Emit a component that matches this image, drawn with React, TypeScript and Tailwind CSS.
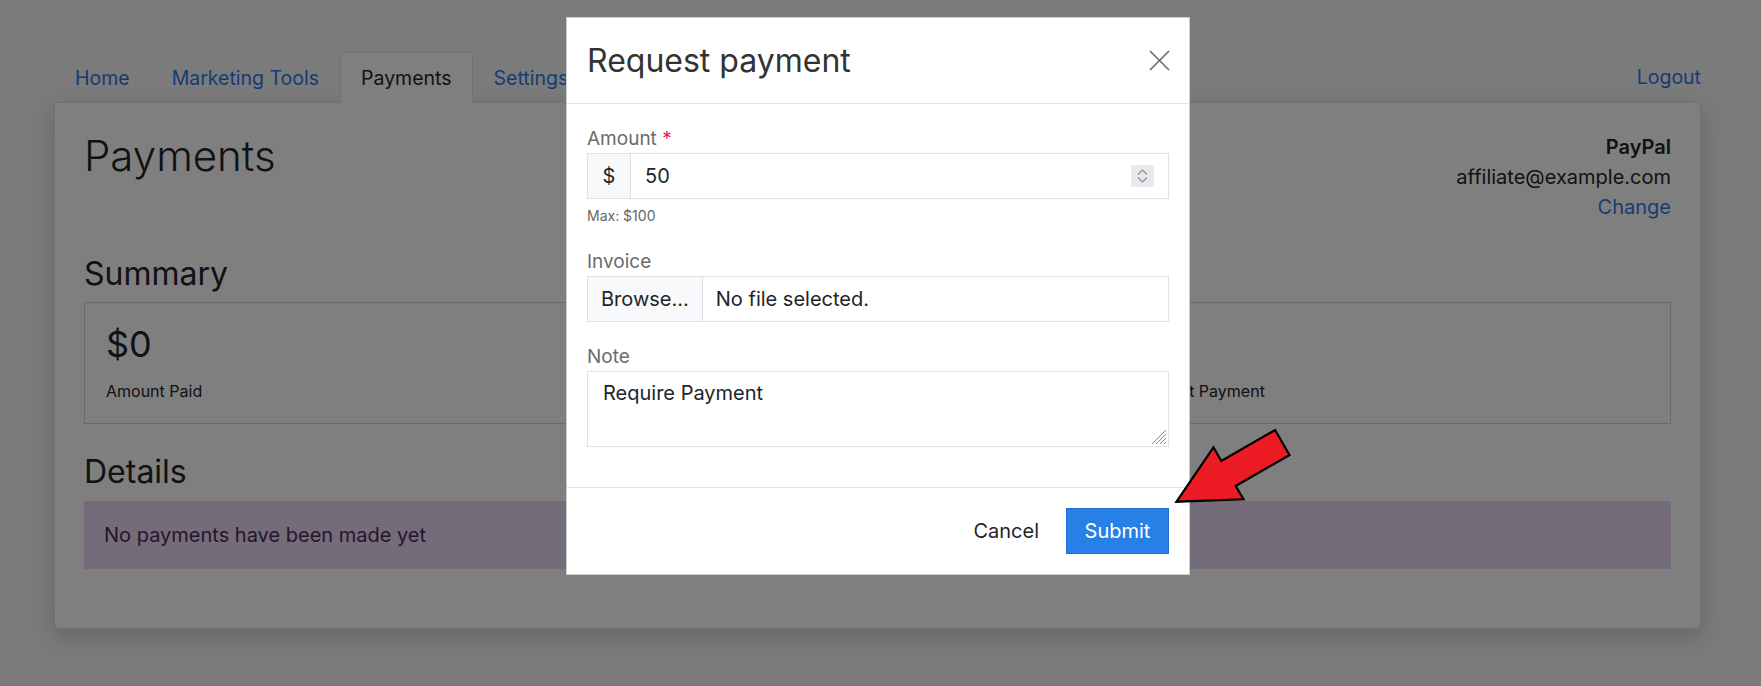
const tabs = ['Home', 'Marketing Tools', 'Payments', 'Settings'];

const stats = [
  { value: '$0', label: 'Amount Paid' },
  { value: '$0', label: 'Pending' },
  { value: '-', label: 'Last Payment' },
];

function Arrow() {
  return (
    <svg
      className="absolute left-[1170px] top-[424px]"
      width="126"
      height="84"
      viewBox="0 0 126 84"
    >
      <polygon
        points="6.5,77.7 43.5,23.3 51.3,37 105.1,6 119.5,31 65.7,62 73.5,75.3"
        fill="#ed1c24"
        stroke="#000"
        strokeWidth="2.2"
        strokeLinejoin="miter"
      />
    </svg>
  );
}

function RequestModal() {
  return (
    <div className="absolute left-[566px] top-[17px] w-[624px] bg-white border border-black/20 text-[#212529]">
      <div className="h-[86px] pl-[20px] pr-[19px] flex items-center justify-between border-b border-[#dee2e6]">
        <h5 className="text-[32px] leading-[38px] text-[#333]">Request payment</h5>
        <svg width="21" height="21" viewBox="0 0 21 21">
          <g stroke="#707070" strokeWidth="1.7">
            <line x1="1" y1="1" x2="20" y2="20" />
            <line x1="20" y1="1" x2="1" y2="20" />
          </g>
        </svg>
      </div>

      <div className="px-[20px] pt-[20px] pb-[40px]">
        <label className="block text-[19px] leading-[29px] text-[#6b6b6b]">
          Amount <span className="text-[#e8174f]">*</span>
        </label>
        <div className="flex h-[46px] border border-[#dee2e6]">
          <div className="w-[43px] flex items-center justify-center bg-[#f8f9fa] border-r border-[#dee2e6] text-[20px]">
            $
          </div>
          <div className="flex-1 flex items-center justify-between pl-[14px] pr-[14px] text-[20px] leading-[30px]">
            <span>50</span>
            <div className="w-[23px] h-[22px] bg-[#e9e9ed] rounded-[2px] flex flex-col items-center justify-center gap-[2px]">
              <svg width="11" height="6" viewBox="0 0 11 6">
                <path d="M1 5.5 L5.5 1 L10 5.5" fill="none" stroke="#8a8a8a" strokeWidth="1.1" />
              </svg>
              <svg width="11" height="6" viewBox="0 0 11 6">
                <path d="M1 0.5 L5.5 5 L10 0.5" fill="none" stroke="#8a8a8a" strokeWidth="1.1" />
              </svg>
            </div>
          </div>
        </div>
        <p className="mt-[6px] text-[14px] leading-[21px] text-[#666]">Max: $100</p>

        <label className="block mt-[21px] text-[19px] leading-[29px] text-[#6b6b6b]">Invoice</label>
        <div className="flex h-[46px] border border-[#dee2e6] text-[20px]">
          <div className="px-[13px] flex items-center bg-[#f8f9fa] border-r border-[#dee2e6]">
            Browse…
          </div>
          <div className="flex items-center pl-[13px]">No file selected.</div>
        </div>

        <label className="block mt-[20px] text-[19px] leading-[29px] text-[#6b6b6b]">Note</label>
        <div className="relative h-[76px] border border-[#dee2e6] px-[15px] pt-[6px] text-[20px] leading-[30px]">
          Require Payment
          <svg className="absolute right-[1px] bottom-[1px]" width="17" height="17" viewBox="0 0 17 17">
            <g stroke="#8a8a8a" strokeWidth="1">
              <line x1="2" y1="16" x2="16" y2="2" />
              <line x1="6" y1="16" x2="16" y2="6" />
              <line x1="10" y1="16" x2="16" y2="10" />
              <line x1="14" y1="16" x2="16" y2="14" />
            </g>
          </svg>
        </div>
      </div>

      <div className="border-t border-[#dee2e6] p-[20px] flex justify-end items-center gap-[11px]">
        <button className="h-[46px] px-[16px] text-[20px]">Cancel</button>
        <button className="h-[46px] w-[103px] bg-[#2680e5] border border-[#1e70d2] text-white text-[20px]">
          Submit
        </button>
      </div>
    </div>
  );
}

export default function App() {
  return (
    <div className="relative h-[686px] overflow-hidden bg-[#f6f6f6] font-['Inter',sans-serif] text-[#212529]">
      <div className="w-[1755px] px-[54px] pt-[52px]">
        <nav className="flex items-end justify-between text-[19.5px] leading-[30px]">
          <ul className="flex">
            {tabs.map((t) => (
              <li
                key={t}
                className={
                  t === 'Payments'
                    ? 'h-[51px] -mb-px px-[20px] flex items-center bg-white border border-[#dee2e6] border-b-white rounded-t-[3px] text-[#212529] relative'
                    : 'h-[51px] -mb-px px-[20px] flex items-center border border-transparent text-[#2a7ae2]'
                }
              >
                {t}
              </li>
            ))}
          </ul>
          <a className="h-[50px] flex items-center text-[#2a7ae2]">Logout</a>
        </nav>

        <div className="bg-white border border-[#dee2e6] rounded-b-[6px] shadow-[0_8px_24px_rgba(0,0,0,0.18)] px-[29px] pt-[29px] pb-[59px]">
          <div className="flex justify-between items-start">
            <h2 className="text-[42px] leading-[48px] font-light">Payments</h2>
            <div className="text-right text-[20px] leading-[30px]">
              <p className="font-semibold">PayPal</p>
              <p>affiliate@example.com</p>
              <a className="text-[#2a7ae2]">Change</a>
            </div>
          </div>

          <h3 className="mt-[34px] mb-[10px] text-[32px] leading-[36px]">Summary</h3>
          <div className="grid grid-cols-3 border border-[#d4d4d4] py-[20px]">
            {stats.map((s) => (
              <div key={s.label} className="px-[21px]">
                <p className="text-[36px] leading-[43px] mb-[13px]">{s.value}</p>
                <p className="text-[16px] leading-[24px]">{s.label}</p>
              </div>
            ))}
          </div>

          <h3 className="mt-[30px] mb-[11px] text-[32px] leading-[36px]">Details</h3>
          <div className="bg-[#ead8f2] text-[#4a2a5c] px-[20px] py-[20px] text-[20px] leading-[28px]">
            No payments have been made yet
          </div>
        </div>
      </div>

      <div className="fixed inset-0 bg-black/50">
        <RequestModal />
        <Arrow />
      </div>
    </div>
  );
}
